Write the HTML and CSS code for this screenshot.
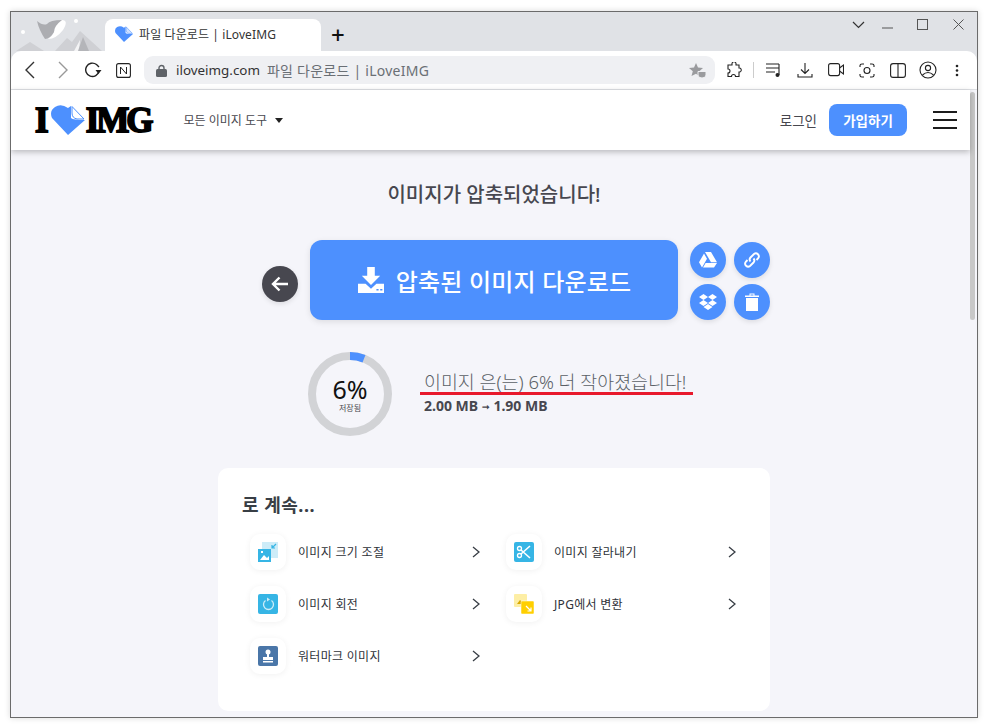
FILE: index.html
```html
<!DOCTYPE html>
<html lang="ko">
<head>
  <meta charset="UTF-8">
  <title>파일 다운로드 | iLoveIMG</title>
  <meta name="viewport" content="width=device-width, initial-scale=1.0">
  <link rel="stylesheet" href="styles.css">
</head>
<body>
  <div class="window">
    <div class="tabstrip">
      <svg class="theme-art" width="94" height="39" viewBox="0 0 94 39">
        <path d="M0 39 L14 30 L28 39Z M39 39 L51 26 L56 30 L64 19 L86 39Z" fill="#cfd0d4"/>
        <path d="M58 39 L64 28 L63 39Z" fill="#f4f4f5"/>
        <path d="M62 39 L67 25 L73 39Z" fill="#b4b5b9"/>
        <circle cx="7" cy="20" r="2" fill="#fff"/>
        <circle cx="60" cy="9" r="2" fill="#fff"/>
        <g transform="translate(-4 0)">
          <path d="M50 8 Q57 8 51 18 Q44 27 36 27 Q44 22 42 14 Q45 9 50 8Z" fill="#fff"/>
          <path d="M25 9 Q31 14 35 12 Q38 8 50 8 Q42 14 42 20 Q38 27 33 27 Q27 18 25 9Z" fill="#acadb1"/>
        </g>
      </svg>
      <div class="tab">
        <svg width="18" height="16" viewBox="0 0 34 30"><path d="M17 30 L1 13 Q-2 6 4 2 Q10 -2 17 3 L20 1 L20 13 Q22 15 34 15Z" fill="#4d90fe"/><path d="M21 1.500 L33 14 L26 14 Q21 13 21 8Z" fill="#cfe0ff" stroke="#4d90fe"/></svg>
        <span class="tab-title">파일 다운로드 | iLoveIMG</span>
      </div>
      <span class="new-tab">+</span>
      <div class="win-buttons">
        <svg class="win-chev" width="13" height="8" viewBox="0 0 13 8"><path d="M1 1 L6.500 6.500 L12 1" fill="none" stroke="#333" stroke-width="1.200"/></svg>
        <svg class="win-min" width="11" height="2" viewBox="0 0 11 2"><path d="M0 1H11" stroke="#555"/></svg>
        <svg class="win-max" width="11" height="11" viewBox="0 0 11 11"><rect x=".5" y=".5" width="10" height="10" fill="none" stroke="#555"/></svg>
        <svg class="win-close" width="11" height="11" viewBox="0 0 11 11"><path d="M.5 .5L10.500 10.500M10.500 .5L.5 10.500" stroke="#555"/></svg>
      </div>
    </div>

    <div class="toolbar">
      <svg class="nav-back" width="12" height="18" viewBox="0 0 12 18"><path d="M10 1 L2 9 L10 17" fill="none" stroke="#333" stroke-width="1.400"/></svg>
      <svg class="nav-fwd" width="12" height="18" viewBox="0 0 12 18"><path d="M2 1 L10 9 L2 17" fill="none" stroke="#999" stroke-width="1.400"/></svg>
      <svg class="nav-reload" width="18" height="16" viewBox="0 0 18 16"><path d="M15 9 A6.700 6.700 0 1 1 12.500 2.500 L15 5" fill="none" stroke="#222" stroke-width="1.400"/><path d="M11.500 8 L17.500 8 L14.500 12Z" fill="#222"/></svg>
      <svg class="nav-n" width="15" height="15" viewBox="0 0 15 15"><rect x=".6" y=".6" width="13.800" height="13.800" rx="2" fill="none" stroke="#222" stroke-width="1.100"/><path d="M4.500 11V4L10.500 11V4" fill="none" stroke="#222"/></svg>
      <div class="omnibox">
        <svg width="11" height="13" viewBox="0 0 11 13"><path d="M3 6V4a2.500 2.500 0 0 1 5 0V6" fill="none" stroke="#5f6368" stroke-width="1.400"/><rect x="0" y="5" width="11" height="8" rx="1.500" fill="#5f6368"/></svg>
        <span class="url">iloveimg.com</span>
        <span class="url-title">파일 다운로드 | iLoveIMG</span>
        <svg class="omni-star" width="17" height="15" viewBox="0 0 17 15"><path d="M7 0 L9 4.500 L14 5 L10.300 8.200 L10 13 L7 10.800 L2.500 13 L3.800 8.200 L0 5 L5 4.500Z" fill="#9a9b9e"/><path d="M9 8.500 H17 V12 Q17 15 13 15 Q9 15 9 12Z" fill="#9a9b9e" stroke="#eff0f3"/></svg>
      </div>
      <div class="tool-icons">
        <svg class="t-puzzle" width="16" height="16" viewBox="0 0 16 16"><path d="M6 1.500 a2 2 0 0 1 4 0.500 L10 3 H13 V6 a2 2 0 0 1 .5 4 H13 V14.500 H9.500 a2 2 0 0 0 -4 0 H2 V11 a2 2 0 0 0 0 -4 V3 H6Z" fill="none" stroke="#222" stroke-width="1.100"/></svg>
        <span class="tool-sep"></span>
        <svg class="t-list" width="16" height="16" viewBox="0 0 16 16"><path d="M0 2H13M0 6H13M0 10H9M13 2V13" fill="none" stroke="#222" stroke-width="1.100"/><circle cx="11.500" cy="13" r="2" fill="#222"/></svg>
        <svg class="t-down" width="16" height="16" viewBox="0 0 16 16"><path d="M8 1V11M4 7.500L8 11.500L12 7.500M1 12V15H15V12" fill="none" stroke="#222" stroke-width="1.100"/></svg>
        <svg class="t-video" width="16" height="14" viewBox="0 0 16 14"><rect x=".6" y=".6" width="11" height="12" rx="2" fill="none" stroke="#222" stroke-width="1.100"/><path d="M11.500 5L15.500 2V11L11.500 8" fill="none" stroke="#222" stroke-width="1.100"/></svg>
        <svg class="t-cam" width="16" height="15" viewBox="0 0 16 15"><path d="M1 4V2.500Q1 1 3 1H5M11 1H13Q15 1 15 2.500V4M15 11V12.500Q15 14 13 14H11M5 14H3Q1 14 1 12.500V11" fill="none" stroke="#222" stroke-width="1.100"/><circle cx="8" cy="7.500" r="3" fill="none" stroke="#222" stroke-width="1.100"/></svg>
        <svg class="t-split" width="16" height="15" viewBox="0 0 16 15"><rect x=".6" y=".6" width="14.800" height="13.800" rx="2.500" fill="none" stroke="#222" stroke-width="1.100"/><path d="M8 1V14" stroke="#222" stroke-width="1.100"/></svg>
        <svg class="t-user" width="18" height="18" viewBox="0 0 18 18"><circle cx="9" cy="9" r="8" fill="none" stroke="#222" stroke-width="1.100"/><circle cx="9" cy="7" r="2.600" fill="none" stroke="#222" stroke-width="1.100"/><path d="M3.500 14Q9 9 14.500 14" fill="none" stroke="#222" stroke-width="1.100"/></svg>
        <svg class="t-dots" width="4" height="13" viewBox="0 0 4 13"><circle cx="2" cy="2" r="1.300" fill="#222"/><circle cx="2" cy="6.500" r="1.300" fill="#222"/><circle cx="2" cy="11" r="1.300" fill="#222"/></svg>
      </div>
    </div>

    <div class="viewport">
      <div class="page">
        <header class="site-header">
          <a class="logo">
            <span>I</span>
            <svg class="logo-heart" width="34" height="30" viewBox="0 0 34 30"><path d="M17 30 L1 13 Q-2 6 4 2 Q10 -2 17 3 L20 1 L20 13 Q22 15 34 15Z" fill="#4d90fe"/><path d="M21 1.500 L33 14 L26 14 Q21 13 21 8Z" fill="#fff" stroke="#4d90fe"/></svg>
            <span>IMG</span>
          </a>
          <a class="tools-menu">모든 이미지 도구 <i class="caret"></i></a>
          <div class="header-right">
            <a class="login">로그인</a>
            <a class="signup">가입하기</a>
            <div class="burger"><i></i><i></i><i></i></div>
          </div>
        </header>

        <main class="content">
          <h1 class="done-title">이미지가 압축되었습니다!</h1>

          <div class="download-row">
            <span class="round-btn back-btn">
              <svg width="18" height="16" viewBox="0 0 18 16"><path d="M8.500 1.500 L2 8 L8.500 14.500 M2 8 H17" fill="none" stroke="#fff" stroke-width="2.400"/></svg>
            </span>
            <a class="download-btn">
              <svg width="26" height="26" viewBox="0 0 24 24"><path d="M8.500 0H15.500V8H20.500L12 16.500L3.500 8H8.500Z M0 15.500H7L12 20L17 15.500H24V24H0Z" fill="#fff"/><path d="M17 21H19M20.500 21H22.500" stroke="#4d90fe" stroke-width="1.400"/></svg>
              <span>압축된 이미지 다운로드</span>
            </a>
            <div class="side-btns">
              <span class="round-btn blue">
                <svg width="18" height="16" viewBox="0 0 18 16"><path d="M6 0H12L18 10.300H12Z M5 1.600L8 6.800L3 15.400L0 10.300Z M6.600 11H18L15 15.500H4Z" fill="#fff"/></svg>
              </span>
              <span class="round-btn blue">
                <svg width="18" height="18" viewBox="0 0 18 18"><path d="M7.500 10.500 A3 3 0 0 1 7.500 6.500 L11 3 A3 3 0 0 1 15.200 7.200 L13.500 9 M10.500 7.500 A3 3 0 0 1 10.500 11.500 L7 15 A3 3 0 0 1 2.800 10.800 L4.500 9" fill="none" stroke="#fff" stroke-width="1.900"/></svg>
              </span>
              <span class="round-btn blue">
                <svg width="18" height="16" viewBox="0 0 18 16"><path d="M4.500 0L9 3L4.500 6L0 3Z M13.500 0L18 3L13.500 6L9 3Z M4.500 6L9 9L4.500 12L0 9Z M13.500 6L18 9L13.500 12L9 9Z M4.500 13L9 10L13.500 13L9 16Z" fill="#fff"/></svg>
              </span>
              <span class="round-btn blue">
                <svg width="14" height="18" viewBox="0 0 14 18"><path d="M0 2.500H14V4H0Z M4.500 2.500V0.500H9.500V2.500H8.500V1.500H5.500V2.500Z M1 5H13V18H1Z" fill="#fff"/></svg>
              </span>
            </div>
          </div>

          <div class="result-row">
            <div class="ring">
              <svg width="84" height="84" viewBox="0 0 84 84">
                <circle cx="42" cy="42" r="38" fill="none" stroke="#d2d3d6" stroke-width="8"/>
                <circle cx="42" cy="42" r="38" fill="none" stroke="#4d90fe" stroke-width="8" stroke-dasharray="14.300 240" transform="rotate(-90 42 42)"/>
              </svg>
              <div class="ring-label">
                <span class="ring-num">6%</span>
                <span class="ring-sub">저장됨</span>
              </div>
            </div>
            <div class="result-text">
              <p class="result-line">이미지 은(는) 6% 더 작아졌습니다!</p>
              <p class="result-size">2.00 MB <span class="arrow">➞</span> 1.90 MB</p>
            </div>
          </div>

          <section class="continue-card">
            <h2>로 계속...</h2>
            <div class="tool-grid">
              <a class="tool-item">
                <span class="tool-icon">
                  <svg width="20" height="20" viewBox="0 0 20 20"><path d="M4 0H20V16H13V7H4Z" fill="#cdecf8"/><path d="M0 7H13V20H0Z" fill="#36b5e5"/><path d="M2 18L6 13L9 16L11 14V18Z M3 9H5V11H3Z" fill="#fff"/><path d="M18 2L14 6M14 3V6H17" fill="none" stroke="#36b5e5" stroke-width="1.200"/></svg>
                </span>
                <span class="tool-name">이미지 크기 조절</span>
                <svg class="chev" width="8" height="12" viewBox="0 0 8 12"><path d="M1 1L7 6L1 11" fill="none" stroke="#383e45" stroke-width="1.300"/></svg>
              </a>
              <a class="tool-item">
                <span class="tool-icon">
                  <svg width="20" height="20" viewBox="0 0 20 20"><rect width="20" height="20" rx="2" fill="#36b5e5"/><path d="M7 8L16 16M7 12L16 4" stroke="#fff" stroke-width="1.600"/><circle cx="5.500" cy="6.500" r="2" fill="none" stroke="#fff" stroke-width="1.300"/><circle cx="5.500" cy="13.500" r="2" fill="none" stroke="#fff" stroke-width="1.300"/></svg>
                </span>
                <span class="tool-name">이미지 잘라내기</span>
                <svg class="chev" width="8" height="12" viewBox="0 0 8 12"><path d="M1 1L7 6L1 11" fill="none" stroke="#383e45" stroke-width="1.300"/></svg>
              </a>
              <a class="tool-item">
                <span class="tool-icon">
                  <svg width="20" height="20" viewBox="0 0 20 20"><rect width="20" height="20" rx="2" fill="#36b5e5"/><path d="M7.500 6.500A5 5 0 1 0 13.500 6.500" fill="none" stroke="#cdecf8" stroke-width="1.300"/><path d="M9 3.500L12 5.500L9 7.500Z" fill="#cdecf8"/></svg>
                </span>
                <span class="tool-name">이미지 회전</span>
                <svg class="chev" width="8" height="12" viewBox="0 0 8 12"><path d="M1 1L7 6L1 11" fill="none" stroke="#383e45" stroke-width="1.300"/></svg>
              </a>
              <a class="tool-item">
                <span class="tool-icon">
                  <svg width="20" height="20" viewBox="0 0 20 20"><rect width="13" height="13" rx="1" fill="#fdeea5"/><path d="M3 10L6 6L8 8L9 7L11 10Z" fill="#d9a800"/><rect x="7" y="7" width="13" height="13" rx="1" fill="#ffcf00" stroke="#fff" stroke-width=".5"/><path d="M12 12L17 17M17 13.500V17H13.500" fill="none" stroke="#fff" stroke-width="1.200"/></svg>
                </span>
                <span class="tool-name">JPG에서 변환</span>
                <svg class="chev" width="8" height="12" viewBox="0 0 8 12"><path d="M1 1L7 6L1 11" fill="none" stroke="#383e45" stroke-width="1.300"/></svg>
              </a>
              <a class="tool-item">
                <span class="tool-icon">
                  <svg width="20" height="20" viewBox="0 0 20 20"><rect width="20" height="20" rx="2" fill="#4a76a8"/><circle cx="10" cy="6" r="2.500" fill="#fff"/><path d="M9 7H11V11H15V14H5V11H9Z M5 15H15V16.500H5Z" fill="#fff"/></svg>
                </span>
                <span class="tool-name">워터마크 이미지</span>
                <svg class="chev" width="8" height="12" viewBox="0 0 8 12"><path d="M1 1L7 6L1 11" fill="none" stroke="#383e45" stroke-width="1.300"/></svg>
              </a>
            </div>
          </section>
        </main>
      </div>
      <div class="scrollbar"><div class="thumb"></div></div>
    </div>
  </div>
</body>
</html>
```

FILE: styles.css
```css
* {
  box-sizing: border-box;
  margin: 0;
  padding: 0;
}

html, body {
  height: 100%;
  overflow: hidden;
}

body {
  padding: 11px 11px 9px 10px;
  background-color: #fff;
  font-family: "Noto Sans", "Noto Sans CJK KR", sans-serif;
  color: #383e45;
}

svg {
  display: block;
  flex-shrink: 0;
}

.window {
  display: flex;
  flex-direction: column;
  height: 100%;
  border: 1px solid #6b6b6b;
  background-color: #e0e2e6;
  box-shadow: 0 0 6px rgba(0, 0, 0, 0.15);
  overflow: hidden;
}

/* browser chrome */
.tabstrip {
  position: relative;
  display: flex;
  align-items: flex-end;
  height: 39px;
  padding-left: 94px;
  flex-shrink: 0;
}

.theme-art {
  position: absolute;
  left: 5px;
  top: 0;
}

.tab {
  position: relative;
  display: flex;
  align-items: center;
  gap: 6px;
  width: 216px;
  height: 32px;
  padding: 0 10px 2px 10px;
  background-color: #fff;
  border-radius: 8px 8px 0 0;
}

.tab-title {
  font-size: 12px;
  letter-spacing: 0.1px;
  color: #333;
  white-space: nowrap;
}

.new-tab {
  margin: 0 0 1px 10px;
  font-size: 24px;
  line-height: 30px;
  font-weight: 500;
  color: #111;
}

.win-buttons {
  display: flex;
  align-items: center;
  margin-left: auto;
  height: 24px;
  padding-right: 13px;
  align-self: flex-start;
}

.win-chev {
  margin-top: 2px;
}

.win-min {
  margin: 8px 0 0 17px;
}

.win-max {
  margin-left: 24px;
}

.win-close {
  margin-left: 25px;
}

.toolbar {
  display: flex;
  align-items: center;
  height: 39px;
  padding-left: 13px;
  background-color: #fff;
  border-bottom: 1px solid #dfe1e5;
  border-radius: 10px 10px 0 0;
  flex-shrink: 0;
}

.nav-fwd {
  margin-left: 21px;
}

.nav-reload {
  margin-left: 15px;
}

.nav-n {
  margin-left: 14px;
}

.omnibox {
  display: flex;
  align-items: center;
  width: 571px;
  height: 28px;
  margin-left: 13px;
  padding: 0 9px 0 12px;
  background-color: #eff0f3;
  border-radius: 9px;
  font-size: 14px;
  white-space: nowrap;
}

.url {
  margin-left: 9px;
  font-size: 13.4px;
  color: #333;
}

.url-title {
  margin-left: 7px;
  letter-spacing: 0.25px;
  color: #6a6f75;
}

.omni-star {
  margin-left: auto;
}

.tool-icons {
  display: flex;
  align-items: center;
  margin-left: 11px;
}

.tool-sep {
  width: 1px;
  height: 16px;
  margin: 0 12px 0 11px;
  background-color: #ccc;
}

.t-down, .t-video, .t-cam, .t-split {
  margin-left: 15px;
}

.t-user {
  margin-left: 13px;
}

.t-dots {
  margin-left: 18px;
}

/* page */
.viewport {
  display: flex;
  flex: 1;
  min-height: 0;
  background-color: #f5f5fa;
}

.page {
  flex: 1;
  min-width: 0;
}

.scrollbar {
  width: 7px;
  padding-top: 2px;
}

.thumb {
  width: 5px;
  height: 228px;
  border-radius: 3px;
  background-color: #c8c8c8;
}

.site-header {
  position: relative;
  display: flex;
  align-items: center;
  height: 60px;
  padding: 0 13px 0 24px;
  background-color: #fff;
  box-shadow: 0 2px 6px rgba(0, 0, 0, 0.25);
}

.logo {
  display: flex;
  align-items: center;
  font-family: "Liberation Serif", serif;
  font-weight: 700;
  font-size: 35px;
  letter-spacing: -3px;
  color: #000;
  -webkit-text-stroke: 1.8px #000;
  line-height: 1;
}

.logo-heart {
  margin: 0 1px 0 5px;
}

.tools-menu {
  margin-left: 33px;
  font-size: 12px;
  color: #47474e;
}

.caret {
  display: inline-block;
  width: 0;
  height: 0;
  margin-left: 5px;
  border-left: 4.5px solid transparent;
  border-right: 4.5px solid transparent;
  border-top: 5px solid #222;
  vertical-align: 2px;
}

.header-right {
  display: flex;
  align-items: center;
  margin-left: auto;
}

.login {
  font-size: 13.5px;
  color: #47474e;
}

.signup {
  display: flex;
  align-items: center;
  justify-content: center;
  width: 78px;
  height: 32px;
  margin-left: 12px;
  border-radius: 8px;
  background-color: #4d90fe;
  color: #fff;
  font-size: 13.5px;
  font-weight: 700;
}

.burger {
  display: flex;
  flex-direction: column;
  gap: 6px;
  width: 24px;
  margin-left: 26px;
}

.burger i {
  display: block;
  height: 2px;
  background-color: #1c1c1c;
}

.content {
  padding-top: 32px;
}

.done-title {
  width: 966px;
  font-size: 20px;
  font-weight: 500;
  line-height: 26px;
  text-align: center;
  color: #47474f;
}

.download-row {
  display: flex;
  align-items: center;
  margin: 32px 0 0 251px;
}

.round-btn {
  display: flex;
  align-items: center;
  justify-content: center;
  width: 36px;
  height: 36px;
  border-radius: 50%;
  box-shadow: 0 2px 5px rgba(0, 0, 0, 0.1);
}

.back-btn {
  margin-top: 8px;
  background-color: #47474f;
}

.blue {
  background-color: #4d90fe;
}

.download-btn {
  display: flex;
  align-items: center;
  justify-content: center;
  gap: 12px;
  width: 368px;
  height: 80px;
  margin-left: 12px;
  padding-left: 1px;
  border-radius: 12px;
  background-color: #4d90fe;
  box-shadow: 0 2px 6px rgba(0, 0, 0, 0.1);
  color: #fff;
  font-size: 24px;
  font-weight: 500;
  letter-spacing: 0.2px;
}

.side-btns {
  display: grid;
  grid-template-columns: 36px 36px;
  gap: 6px 8px;
  margin: 2px 0 0 12px;
}

.result-row {
  display: flex;
  align-items: center;
  margin: 32px 0 0 297px;
}

.ring {
  position: relative;
  width: 84px;
  height: 84px;
}

.ring-label {
  position: absolute;
  top: 0;
  left: 0;
  right: 0;
  bottom: 0;
  display: flex;
  flex-direction: column;
  align-items: center;
  justify-content: center;
  padding-top: 2px;
}

.ring-num {
  font-size: 25px;
  line-height: 25px;
  color: #111;
}

.ring-sub {
  font-size: 8px;
  line-height: 12px;
  color: #47474e;
}

.result-text {
  margin-left: 28px;
}

.result-line {
  padding: 0 7px 0 4px;
  border-bottom: 3px solid #e8192c;
  font-size: 18.4px;
  font-weight: 300;
  line-height: 21px;
  color: #5a5f66;
}

.result-size {
  padding-left: 4px;
  font-size: 14px;
  font-weight: 700;
  line-height: 21px;
  color: #47474f;
}

.arrow {
  font-size: 9px;
  vertical-align: 1px;
}

.continue-card {
  width: 552px;
  height: 243px;
  margin: 32px 0 0 207px;
  padding: 25px 24px 0;
  border-radius: 10px;
  background-color: #fff;
}

.continue-card h2 {
  font-size: 18px;
  font-weight: 700;
  line-height: 24px;
  letter-spacing: 0.5px;
  color: #383e45;
}

.tool-grid {
  display: grid;
  grid-template-columns: 240px 240px;
  column-gap: 16px;
  row-gap: 16px;
  margin-top: 17px;
  padding-left: 8px;
}

.tool-item {
  display: flex;
  align-items: center;
  height: 36px;
}

.tool-icon {
  display: flex;
  align-items: center;
  justify-content: center;
  width: 36px;
  height: 36px;
  border-radius: 10px;
  background-color: #fff;
  box-shadow: 0 1px 6px rgba(0, 0, 0, 0.06);
}

.tool-name {
  margin-left: 12px;
  font-size: 12px;
  color: #2e3238;
  letter-spacing: 0.3px;
}

.chev {
  margin-left: auto;
  margin-right: 10px;
}
```
